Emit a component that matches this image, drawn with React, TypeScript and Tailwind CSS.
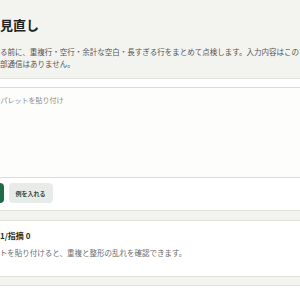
import * as React from "react"

export default function App() {
  return (
    <div className="h-[300px] w-[300px] overflow-hidden bg-[#f3f3ef] font-['Noto_Sans_CJK_JP',sans-serif]">
      <div className="-ml-[40px] w-[440px]">
        {/* Header */}
        <header className="pl-[17.5px] pt-[16px] pb-[7.5px]">
          <h1 className="-ml-[3.5px] text-[13px] font-bold leading-[17px] text-[#1f1f1f]">
            行の見直し
          </h1>
          <p className="mt-[12.5px] w-[392px] text-[7.5px] leading-[12.5px] text-[#555]">
            共有する前に、重複行・空行・余計な空白・長すぎる行をまとめて点検します。入力内容はこのブラウザ内で処理され、外部通信はありません。
          </p>
        </header>

        {/* Input card */}
        <section className="border-y border-[#e2e2dc] bg-white pl-[17.5px] pt-[8px] pb-[7px]">
          <textarea
            aria-label="入力"
            className="block h-[91px] w-[380px] resize-none rounded-[4px] border border-[#dcdcd6] bg-[#fdfdfc] pl-[8px] pt-[7px] text-[7px] leading-[10px] outline-none placeholder:text-[#8a8a8a]"
            placeholder="色のパレットを貼り付け"
          />
          <div className="mt-[5px] flex gap-[5px]">
            <button
              type="button"
              className="h-[20px] w-[26px] rounded-[4px] bg-[#1f6b47] text-[6px] font-bold text-white"
            >
              点検
            </button>
            <button
              type="button"
              className="h-[20px] w-[44px] rounded-[4px] bg-[#e8ece8] text-[6px] font-bold text-[#2f4a3a]"
            >
              例を入れる
            </button>
          </div>
        </section>

        {/* Result card */}
        <section className="mt-[9px] border-y border-[#e2e2dc] bg-white pl-[17.5px] pt-[8.5px] pb-[16.75px]">
          <div className="flex gap-[6.5px] text-[8px] font-bold leading-[11px] text-[#1f2d25]">
            <span>行数</span>
            <span>1/指摘 0</span>
          </div>
          <p className="mt-[6.25px] text-[7.5px] leading-[12.5px] text-[#6b6b6b]">
            テキストを貼り付けると、重複と整形の乱れを確認できます。
          </p>
        </section>

        <section className="mt-[8px] h-[40px] border-t border-[#e2e2dc] bg-white" />
      </div>
    </div>
  )
}
